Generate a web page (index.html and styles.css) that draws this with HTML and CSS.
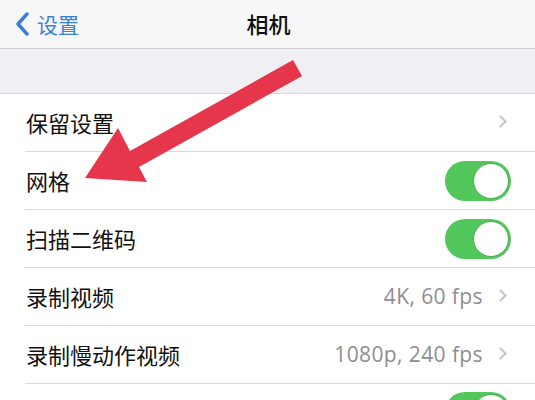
FILE: index.html
```html
<!DOCTYPE html>
<html lang="zh-CN">
<head>
    <meta charset="UTF-8">
    <title>相机</title>
    <link rel="stylesheet" href="styles.css">
</head>
<body>
    <div class="screen">
        <header class="nav-bar">
            <a class="back" href="#">
                <svg class="back-icon" width="18" height="24" viewBox="0 0 18 24">
                    <path d="M13 2 L4 12 L13 22" fill="none" stroke="#3a7fdc" stroke-width="3.4" stroke-linecap="round" stroke-linejoin="round"/>
                </svg>
                <span>设置</span>
            </a>
            <h1 class="title">相机</h1>
        </header>

        <div class="group-gap"></div>

        <ul class="settings-list">
            <li class="row">
                <span class="label">保留设置</span>
                <span class="chevron"></span>
            </li>
            <li class="row">
                <span class="label">网格</span>
                <span class="switch on"><span class="knob"></span></span>
            </li>
            <li class="row">
                <span class="label">扫描二维码</span>
                <span class="switch on"><span class="knob"></span></span>
            </li>
            <li class="row">
                <span class="label">录制视频</span>
                <span class="value">4K, 60 fps</span>
                <span class="chevron"></span>
            </li>
            <li class="row">
                <span class="label">录制慢动作视频</span>
                <span class="value">1080p, 240 fps</span>
                <span class="chevron"></span>
            </li>
            <li class="row">
                <span class="label">&nbsp;</span>
                <span class="switch on"><span class="knob"></span></span>
            </li>
        </ul>

        <!-- red annotation arrow drawn over the list -->
        <svg class="arrow" width="535" height="400" viewBox="0 0 535 400">
            <polygon points="293,60 302,76 139,167 147,182 85,178 118,128 130,151" fill="#e5364b"/>
        </svg>
    </div>
</body>
</html>
```

FILE: styles.css
```css
:root {
    --blue: #3a7fdc;
    --green: #52c75c;
    --separator: #d9d9de;
    --gray-text: #8e8e93;
}

* {
    margin: 0;
    padding: 0;
    box-sizing: border-box;
}

body {
    font-family: "Noto Sans CJK SC", "Noto Sans", sans-serif;
    color: #111;
    background: #fff;
}

.screen {
    position: relative;
    width: 535px;
    height: 400px;
    overflow: hidden;
}

.nav-bar {
    position: relative;
    height: 49px;
    background: #f7f7f8;
    border-bottom: 1px solid #cfcfd3;
    display: flex;
    align-items: center;
    justify-content: center;
}

.back {
    position: absolute;
    left: 14px;
    top: 9px;
    display: flex;
    align-items: center;
    gap: 5px;
    text-decoration: none;
    color: var(--blue);
    font-size: 21px;
    line-height: 30px;
}

.title {
    font-size: 22px;
    font-weight: 500;
    line-height: 30px;
    margin-top: -2px;
    margin-left: 2px;
}

.group-gap {
    height: 45px;
    background: #efeff4;
    border-bottom: 1px solid var(--separator);
}

.settings-list {
    list-style: none;
    padding-left: 25px;
}

.row {
    height: 58px;
    display: flex;
    align-items: center;
    border-bottom: 1px solid var(--separator);
    padding-right: 25px;
}

.label {
    flex: 1;
    font-size: 22px;
    padding-left: 1px;
    margin-top: -2px;
}

.value {
    font-family: "Open Sans", Roboto, sans-serif;
    font-size: 21px;
    letter-spacing: 0.4px;
    color: var(--gray-text);
    margin-right: 13px;
    margin-top: -2px;
}

.chevron {
    width: 9px;
    height: 9px;
    border-top: 2px solid #c4c4c9;
    border-right: 2px solid #c4c4c9;
    transform: rotate(45deg);
    margin-right: 5px;
    margin-top: -2px;
}

.switch {
    width: 66px;
    height: 40px;
    border-radius: 20px;
    background: var(--green);
    display: flex;
    align-items: center;
    justify-content: flex-end;
    padding: 2px;
    margin-right: -1px;
}

.knob {
    width: 36px;
    height: 36px;
    border-radius: 50%;
    background: #fff;
    border: 1px solid #47a950;
}

.settings-list .row:last-child {
    align-items: flex-start;
    padding-top: 8px;
}

.arrow {
    position: absolute;
    left: 0;
    top: 0;
    pointer-events: none;
}
```
